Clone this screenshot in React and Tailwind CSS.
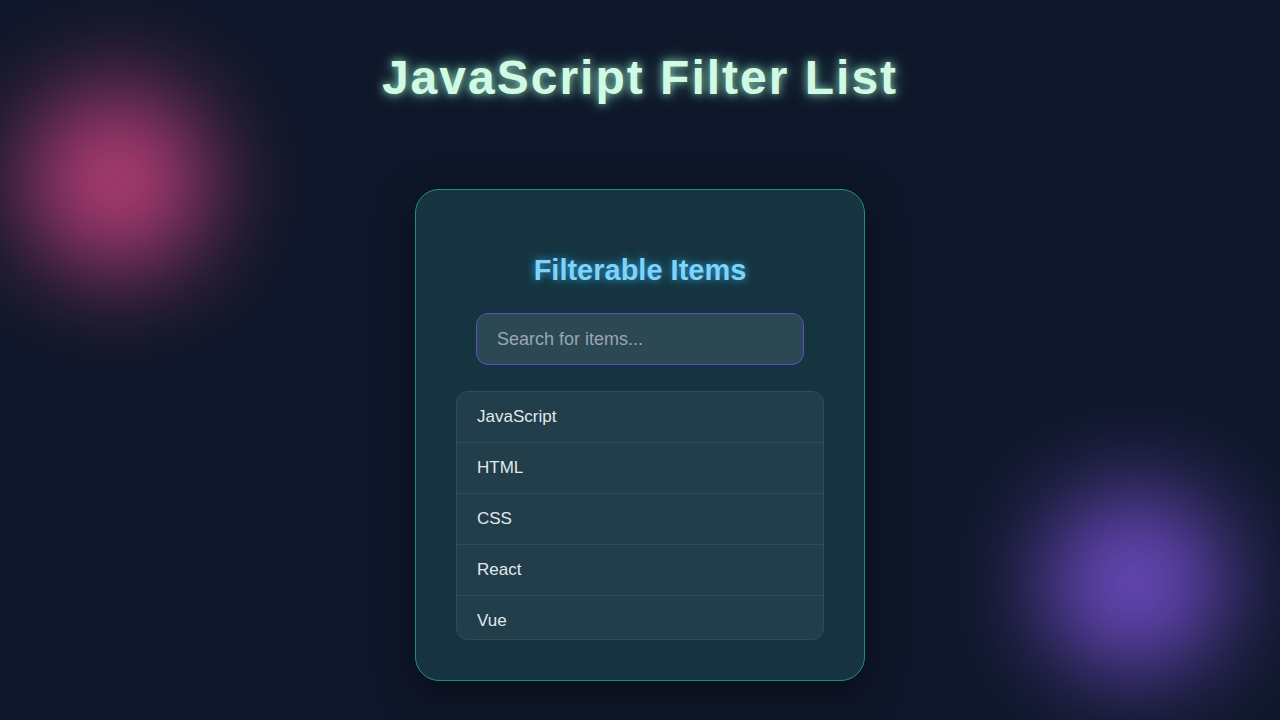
export default function App() {
  const items = ["JavaScript", "HTML", "CSS", "React", "Vue"];

  return (
    <div className="relative w-full min-h-[720px] overflow-hidden bg-[#0f172a] font-['Liberation_Sans',Arial,sans-serif]">
      {/* glow blobs */}
      <div className="absolute left-[24px] top-[88px] w-[185px] h-[185px] rounded-full bg-[#c8427f] blur-[50px] opacity-90" />
      <div className="absolute left-[1042px] top-[490px] w-[185px] h-[185px] rounded-full bg-[#7650d0] blur-[50px] opacity-90" />

      <div className="relative flex flex-col items-center">
        <h1 className="mt-[47px] text-[48px] leading-[62px] font-bold tracking-[2px] text-[#d1fae5] [text-shadow:0_0_8px_rgba(167,243,208,0.8),0_0_18px_rgba(110,231,183,0.45)]">
          JavaScript Filter List
        </h1>

        <div className="mt-[80px] w-[450px] rounded-[24px] border border-[#1f8f86] bg-[#153440] px-[40px] pt-[63px] pb-[40px] shadow-[0_10px_40px_rgba(0,0,0,0.5)]">
          <h2 className="text-center text-[29px] leading-[34px] font-bold text-[#7dd3fc] [text-shadow:0_0_8px_rgba(56,189,248,0.8)]">
            Filterable Items
          </h2>

          <input
            type="text"
            placeholder="Search for items..."
            className="mx-auto mt-[26px] block w-[328px] h-[52px] rounded-[12px] border border-[#5b50c8] bg-[#2c4853] px-[20px] text-[18px] text-[#e2e8f0] placeholder:text-[#9aa6b2] outline-none"
          />

          <ul className="mt-[26px] h-[249px] overflow-hidden rounded-[12px] border border-[#2f4d58] bg-[#213e4a]">
            {items.map((item) => (
              <li
                key={item}
                className="h-[51px] flex items-center px-[20px] text-[17px] text-[#e2e8f0] border-b border-[#2f4d58]"
              >
                {item}
              </li>
            ))}
          </ul>
        </div>
      </div>
    </div>
  );
}
